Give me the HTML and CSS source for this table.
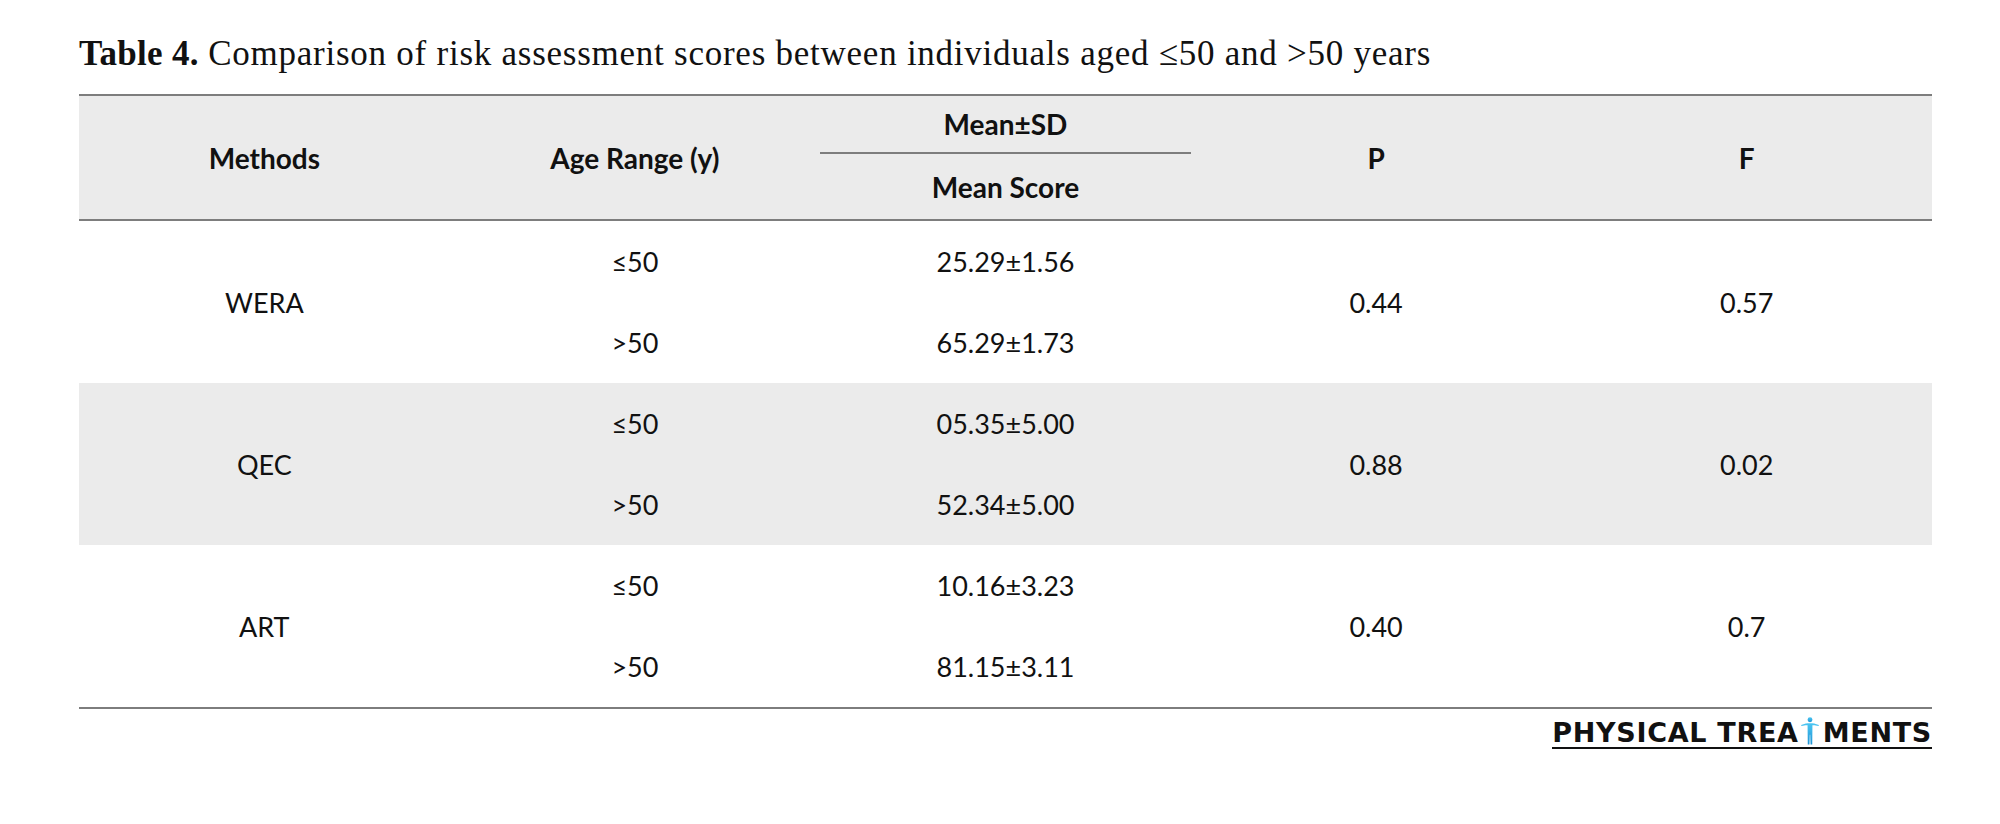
FILE: index.html
```html
<!DOCTYPE html>
<html>
<head>
<meta charset="utf-8">
<link rel="stylesheet" href="styles.css">
</head>
<body>
<div class="page">
  <p class="caption"><b>Table 4.</b> Comparison of risk assessment scores between individuals aged ≤50 and &gt;50 years</p>
  <table class="data">
    <thead>
      <tr class="h1">
        <th rowspan="2">Methods</th>
        <th rowspan="2">Age Range (y)</th>
        <th class="msd">Mean±SD</th>
        <th rowspan="2">P</th>
        <th rowspan="2">F</th>
      </tr>
      <tr class="h2">
        <th>Mean Score</th>
      </tr>
    </thead>
    <tbody>
      <tr class="w"><td rowspan="2">WERA</td><td>≤50</td><td>25.29±1.56</td><td rowspan="2">0.44</td><td rowspan="2">0.57</td></tr>
      <tr class="w"><td>&gt;50</td><td>65.29±1.73</td></tr>
      <tr class="g"><td rowspan="2">QEC</td><td>≤50</td><td>05.35±5.00</td><td rowspan="2">0.88</td><td rowspan="2">0.02</td></tr>
      <tr class="g"><td>&gt;50</td><td>52.34±5.00</td></tr>
      <tr class="w"><td rowspan="2">ART</td><td>≤50</td><td>10.16±3.23</td><td rowspan="2">0.40</td><td rowspan="2">0.7</td></tr>
      <tr class="w"><td>&gt;50</td><td>81.15±3.11</td></tr>
    </tbody>
  </table>
  <div class="logo-row">
    <div class="logo">
      <span class="logo-text">PHYSICAL TREA</span><svg class="figure" viewBox="0 0 20 30" width="20" height="28" aria-hidden="true"><defs><linearGradient id="fg" x1="0" y1="0" x2="0" y2="1"><stop offset="0" stop-color="#4cc6f2"/><stop offset="1" stop-color="#1f95d6"/></linearGradient></defs><circle cx="10" cy="3" r="2.6" fill="url(#fg)"/><path d="M0.5 8.6 C4 7 7 6.6 10 6.6 C13 6.6 16 7 19.5 8.6 L19.2 9.6 C16 8.8 14 8.7 12.6 8.9 L12.4 29.5 L10.6 29.5 L10.2 19 L9.8 19 L9.4 29.5 L7.6 29.5 L7.4 8.9 C6 8.7 4 8.8 0.8 9.6 Z" fill="url(#fg)"/></svg><span class="logo-text">MENTS</span>
    </div>
  </div>
</div>
</body>
</html>
```
FILE: styles.css
```css
html, body {
  margin: 0;
  padding: 0;
  background: #ffffff;
}
.page {
  padding: 30px 68px 0 79px;
  width: 1853px;
}
.caption {
  margin: 0 0 16px 0;
  font-family: "Liberation Serif", "Times New Roman", serif;
  font-size: 35px;
  letter-spacing: 0.75px;
  line-height: 48px;
  color: #111;
}
.caption b {
  font-weight: bold;
  letter-spacing: 0.3px;
}
.data {
  width: 1853px;
  border-collapse: collapse;
  table-layout: fixed;
  font-family: Lato, "Open Sans", sans-serif;
  font-size: 27px;
  color: #111;
  border-top: 2px solid #7d7d7d;
  border-bottom: 2px solid #7d7d7d;
}
.data th, .data td {
  text-align: center;
  vertical-align: middle;
  padding: 0;
}
.data thead {
  background: #ebebeb;
  border-bottom: 2px solid #7d7d7d;
}
.data th {
  font-weight: bold;
  font-size: 28px;
}
.h1 { height: 58px; }
.h2 { height: 67px; }
.msd {
  border-bottom: 2px solid #7d7d7d;
}
.w td { height: 81px; background: #ffffff; }
.g td { height: 81px; background: #ebebeb; }
.logo-row {
  display: flex;
  justify-content: flex-end;
  padding-top: 8px;
}
.logo {
  display: flex;
  align-items: flex-end;
  border-bottom: 2px solid #111;
  padding-bottom: 1px;
  font-family: "DejaVu Sans", sans-serif;
  font-weight: bold;
  font-size: 27px;
  line-height: 27px;
  color: #111;
}
.logo-text {
  letter-spacing: 0.7px;
}
.figure {
  margin: 0 3px 1px 1px;
}
```
